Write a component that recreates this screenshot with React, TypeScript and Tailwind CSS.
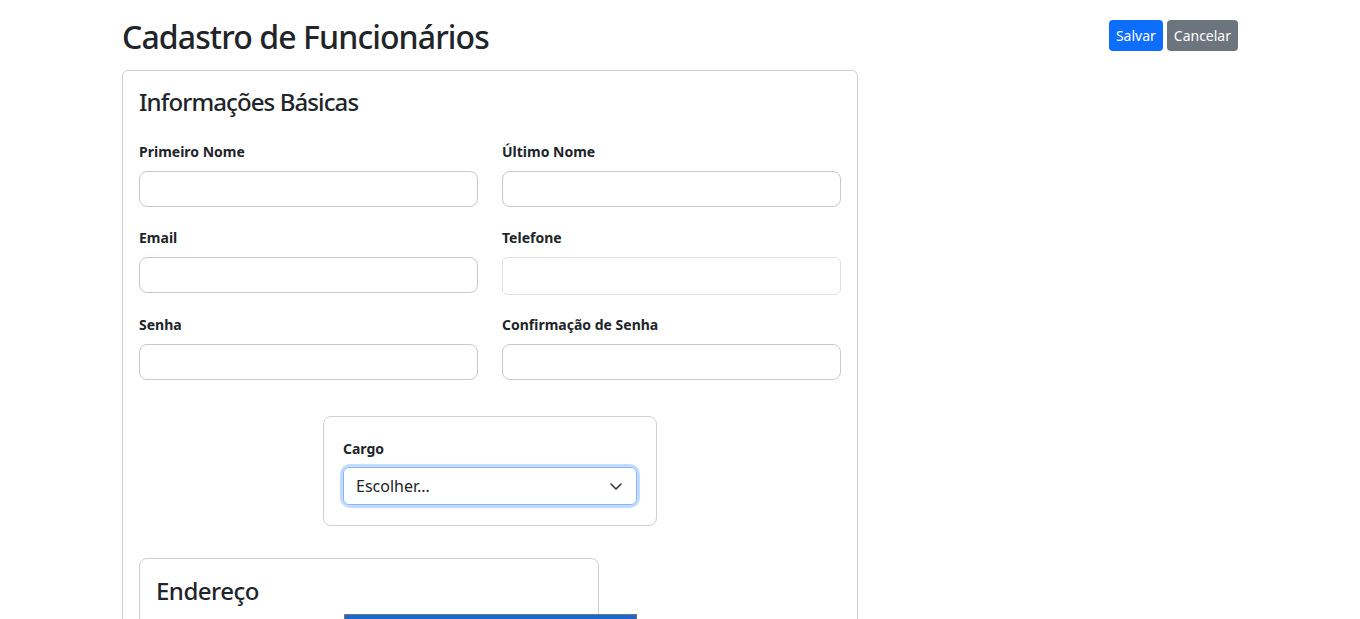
import React from 'react';

const fields = [
    [{ label: 'Primeiro Nome' }, { label: 'Último Nome' }],
    [{ label: 'Email' }, { label: 'Telefone', plain: true }],
    [{ label: 'Senha' }, { label: 'Confirmação de Senha' }],
];

const Field: React.FC<{ label: string; plain?: boolean }> = ({ label, plain }) => (
    <div>
        <label className="block text-[14px] font-bold leading-[21px] mb-[9px] text-[#212529]">{label}</label>
        {plain ? (
            <input className="block w-full h-[38px] border border-[#dee2e6] rounded-[6px] bg-white outline-none" />
        ) : (
            <input className="block w-full h-[36px] border border-[#c9c9c9] rounded-[8px] bg-white outline-none" />
        )}
    </div>
);

const App: React.FC = () => {
    return (
        <div className="relative min-h-[619px] overflow-hidden bg-white text-[#212529]" style={{ fontFamily: '"Noto Sans", sans-serif' }}>
            <div className="w-[1116px] mx-auto">
                <div className="flex justify-between items-start pt-[20px]">
                    <h2 className="text-[32px] font-medium leading-[38px] -mt-[2px] tracking-[-0.9px]">Cadastro de Funcionários</h2>
                    <div className="flex gap-1">
                        <button className="h-[31px] px-[7px] rounded-[4px] bg-[#0d6efd] text-white text-[14px]">Salvar</button>
                        <button className="h-[31px] px-[7px] rounded-[4px] bg-[#6c757d] text-white text-[14px]">Cancelar</button>
                    </div>
                </div>

                <div className="mt-[14px] w-[736px] border border-[#d0d0d0] rounded-[6px] px-4 pt-4 pb-10">
                    <h4 className="text-[24px] font-medium leading-[29px] mb-[25px] tracking-[-0.9px]">Informações Básicas</h4>
                    <div className="flex flex-col">
                        {fields.map((row, i) => (
                            <div key={i} className={i === 0 ? 'grid grid-cols-2 gap-6' : i === 1 ? 'grid grid-cols-2 gap-6 mt-[20px]' : 'grid grid-cols-2 gap-6 mt-[19px]'}>
                                {row.map((f) => (
                                    <Field key={f.label} label={f.label} plain={f.plain} />
                                ))}
                            </div>
                        ))}
                    </div>

                    <div className="mt-[36px] mx-auto w-[334px] border border-[#d0d0d0] rounded-[8px] px-[19px] pt-[21px] pb-[20px]">
                        <label className="block text-[14px] font-bold leading-[21px] mb-2">Cargo</label>
                        <div className="relative rounded-[7px] shadow-[0_0_0_3px_#c2dbfe]">
                            <div className="h-[38px] border border-[#86b7fe] rounded-[6px] bg-white flex items-center justify-between pl-3 pr-[14px] text-[16px]">
                                <span>Escolher...</span>
                                <svg width="12" height="7" viewBox="0 0 12 7" fill="none">
                                    <path d="M1 1l5 5 5-5" stroke="#343a40" strokeWidth="1.6" strokeLinecap="round" strokeLinejoin="round" />
                                </svg>
                            </div>
                        </div>
                    </div>

                    <div className="mt-[32px] w-[460px] h-[120px] border border-[#d0d0d0] rounded-[8px] px-4 pt-[17px]">
                        <h4 className="text-[24px] font-medium leading-[29px] tracking-[-0.5px]">Endereço</h4>
                    </div>
                </div>
            </div>

            <div className="absolute left-[344px] top-[614px] w-[293px] h-[20px] border border-[#767676] bg-[#1a67d0]" />
        </div>
    );
};

export default App;
